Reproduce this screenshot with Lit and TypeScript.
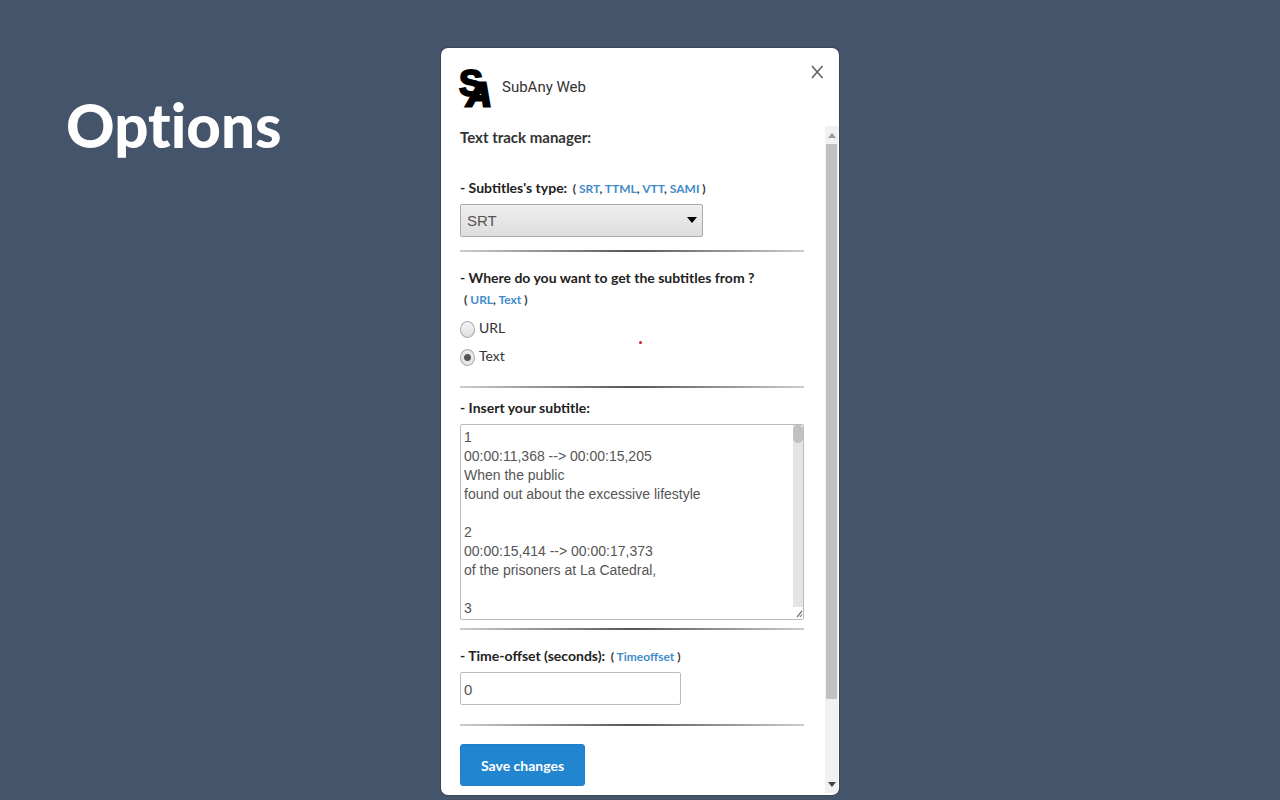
import { LitElement, html, css } from "lit";
import { customElement, state } from "lit/decorators.js";

const SUBTITLE = `1
00:00:11,368 --> 00:00:15,205
When the public
found out about the excessive lifestyle

2
00:00:15,414 --> 00:00:17,373
of the prisoners at La Catedral,

3`;

@customElement("app-root")
export class AppRoot extends LitElement {
  @state() private source = "text";

  static styles = css`
    :host {
      display: block;
      box-sizing: border-box;
      min-height: 100vh;
      padding: 48px 0 5px;
      background: #44546a;
      font-family: Lato, sans-serif;
      font-size: 14px;
      line-height: 20px;
      color: #333;
    }
    * {
      box-sizing: border-box;
    }
    .page {
      display: grid;
      grid-template-columns: 1fr 398px 1fr;
    }
    h1 {
      margin: 37px 0 0 66px;
      font-size: 60px;
      line-height: 80px;
      font-weight: 900;
      font-variant-ligatures: none;
      color: #fff;
    }
    .panel {
      position: relative;
      background: #fff;
      border-radius: 7px;
      box-shadow: 0 0 1px 1px #3a4658;
      overflow: hidden;
    }
    header {
      display: flex;
      height: 78px;
      padding: 20px 14px 0 18px;
    }
    .logo {
      width: 34px;
      height: 40px;
      overflow: visible;
      font: 900 36px/40px "Liberation Sans", sans-serif;
    }
    .brand {
      flex: 1;
      margin-left: 9px;
      font: 15px/38px Roboto, sans-serif;
    }
    .close {
      width: 16px;
      height: 16px;
      margin-top: -4px;
      padding: 0;
      border: 0;
      background: none;
    }
    svg {
      display: block;
    }
    .body {
      display: flex;
    }
    form {
      flex: 1;
      min-width: 0;
      padding: 0 21px 9px 19px;
    }
    h2 {
      margin: 0 0 30px;
      font-size: 15px;
      line-height: 22px;
      font-weight: 700;
    }
    .name {
      font-weight: 700;
      color: #222;
    }
    .links {
      margin-left: 2px;
      font-size: 12px;
      font-weight: 700;
    }
    a {
      color: #428bca;
      text-decoration: none;
    }
    .rule {
      height: 2px;
      margin: 0;
      border: 0;
      background: linear-gradient(90deg, #ccc, #555 50%, #ccc);
    }
    section {
      padding: 16px 0;
    }
    .row {
      display: block;
    }
    .type {
      padding: 0 0 13px;
    }
    .pick {
      position: relative;
      width: 243px;
      margin-top: 5px;
    }
    select {
      display: block;
      appearance: none;
      width: 100%;
      height: 33px;
      padding: 0 6px;
      border: 1px solid #aaa;
      border-radius: 2px;
      background: linear-gradient(#eee, #dedede);
      font: 15px "Liberation Sans", sans-serif;
      color: #555;
    }
    .arrow {
      position: absolute;
      right: 6px;
      top: 13px;
      pointer-events: none;
    }
    .from .links {
      display: block;
      margin: 2px 0 0 4px;
    }
    .from {
      padding-bottom: 16px;
    }
    .options {
      padding-top: 4px;
    }
    .option {
      display: flex;
      align-items: center;
      gap: 4px;
      height: 28px;
    }
    input[type="radio"] {
      appearance: none;
      width: 15px;
      height: 17px;
      margin: 2px 0 0;
      border: 1px solid #aaa;
      border-radius: 50%;
      background: linear-gradient(#f4f4f4, #dedede);
    }
    input[type="radio"]:checked {
      background: radial-gradient(circle, #555 0 3px, #e8e8e8 4px);
    }
    .insert {
      padding: 10px 0 8px;
    }
    .editor {
      position: relative;
      display: flex;
      height: 196px;
      margin-top: 6px;
      border: 1px solid #bbb;
      border-radius: 2px;
    }
    textarea {
      flex: 1;
      min-width: 0;
      padding: 3px;
      border: 0;
      resize: none;
      overflow: hidden;
      background: none;
      font: 14px/19px "Liberation Sans", sans-serif;
      color: #555;
    }
    .track {
      display: flex;
      flex-direction: column;
      justify-content: space-between;
      width: 10px;
      background: #e4e4e4;
    }
    .knob {
      height: 18px;
      border-radius: 5px;
      background: #c1c1c1;
    }
    .grip {
      background: #fff;
    }
    .offset {
      padding-bottom: 19px;
    }
    input[type="number"] {
      display: block;
      appearance: textfield;
      width: 221px;
      height: 33px;
      margin-top: 5px;
      padding: 2px 3px 0;
      border: 1px solid #bbb;
      border-radius: 2px;
      font: 15px "Liberation Sans", sans-serif;
      color: #555;
    }
    .save {
      display: block;
      height: 42px;
      margin-top: 18px;
      padding: 0 20px;
      border: 1px solid #1f7fc9;
      border-radius: 3px;
      background: #2185d0;
      font: 700 14px Lato, sans-serif;
      color: #fff;
    }
    .scrollbar {
      display: flex;
      flex-direction: column;
      width: 13px;
      margin: 0 1px 2px 0;
      background: #f1f1f1;
    }
    .thumb {
      flex: 0 1 555px;
      margin: 0 1px;
      background: #c1c1c1;
    }
    .down {
      margin-top: auto;
    }
    .dot {
      position: absolute;
      left: 198px;
      top: 293px;
      width: 3px;
      height: 3px;
      border-radius: 50%;
      background: #c1272d;
    }
  `;

  private option(value: string, label: string) {
    return html`<label class="option">
      <input
        type="radio"
        name="source"
        value=${value}
        .checked=${this.source === value}
        @change=${() => (this.source = value)}
      />${label}
    </label>`;
  }

  render() {
    return html`
      <main class="page">
        <h1>Options</h1>
        <div class="panel">
          <header>
            <svg class="logo" viewBox="0 0 34 40" aria-label="SubAny">
              <text x="0" y="28" stroke="#000" stroke-width="2">
                S<tspan x="8" y="38" font-size="34" font-style="italic" stroke-width="3">A</tspan>
              </text>
            </svg>
            <span class="brand">SubAny Web</span>
            <button class="close" aria-label="Close">
              <svg width="16" height="16" viewBox="0 0 16 16">
                <path d="M3 2 13.500 14M13.500 2 3 14" fill="none" stroke="#666" stroke-width="1.700" />
              </svg>
            </button>
          </header>
          <div class="body">
            <form @submit=${(e: Event) => e.preventDefault()}>
              <h2>Text track manager:</h2>
              <section class="type">
                <label class="name" for="type">- Subtitles's type:</label>
                <span class="links"
                  >( <a href="#srt">SRT</a>, <a href="#ttml">TTML</a>, <a href="#vtt">VTT</a>,
                  <a href="#sami">SAMI</a> )</span
                >
                <div class="pick">
                  <select id="type">
                    <option>SRT</option>
                    <option>TTML</option>
                    <option>VTT</option>
                    <option>SAMI</option>
                  </select>
                  <svg class="arrow" width="10" height="6" viewBox="0 0 10 6"><path d="M0 0h10L5 6z" /></svg>
                </div>
              </section>
              <hr class="rule" />
              <section class="from">
                <span class="name" id="from">- Where do you want to get the subtitles from ?</span>
                <span class="links">( <a href="#url">URL</a>, <a href="#text">Text</a> )</span>
                <div class="options" role="radiogroup" aria-labelledby="from">
                  ${this.option("url", "URL")} ${this.option("text", "Text")}
                </div>
              </section>
              <hr class="rule" />
              <section class="insert">
                <label class="name row" for="subtitle">- Insert your subtitle:</label>
                <div class="editor">
                  <textarea id="subtitle" .value=${SUBTITLE}></textarea>
                  <div class="track">
                    <div class="knob"></div>
                    <svg class="grip" width="10" height="12" viewBox="0 0 10 12">
                      <path d="M4 10 9 4M7 10 9 7.500" stroke="#777" stroke-width="1.200" />
                    </svg>
                  </div>
                </div>
              </section>
              <hr class="rule" />
              <section class="offset">
                <label class="name" for="offset">- Time-offset (seconds):</label>
                <span class="links">( <a href="#timeoffset">Timeoffset</a> )</span>
                <input id="offset" type="number" value="0" />
              </section>
              <hr class="rule" />
              <button class="save">Save changes</button>
            </form>
            <div class="scrollbar">
              <svg width="13" height="18" viewBox="0 0 13 18"><path d="M3 12h8L7 7z" fill="#999" /></svg>
              <div class="thumb"></div>
              <svg class="down" width="13" height="16" viewBox="0 0 13 16"><path d="M3 5h8L7 10z" fill="#444" /></svg>
            </div>
          </div>
          <span class="dot"></span>
        </div>
      </main>
    `;
  }
}
